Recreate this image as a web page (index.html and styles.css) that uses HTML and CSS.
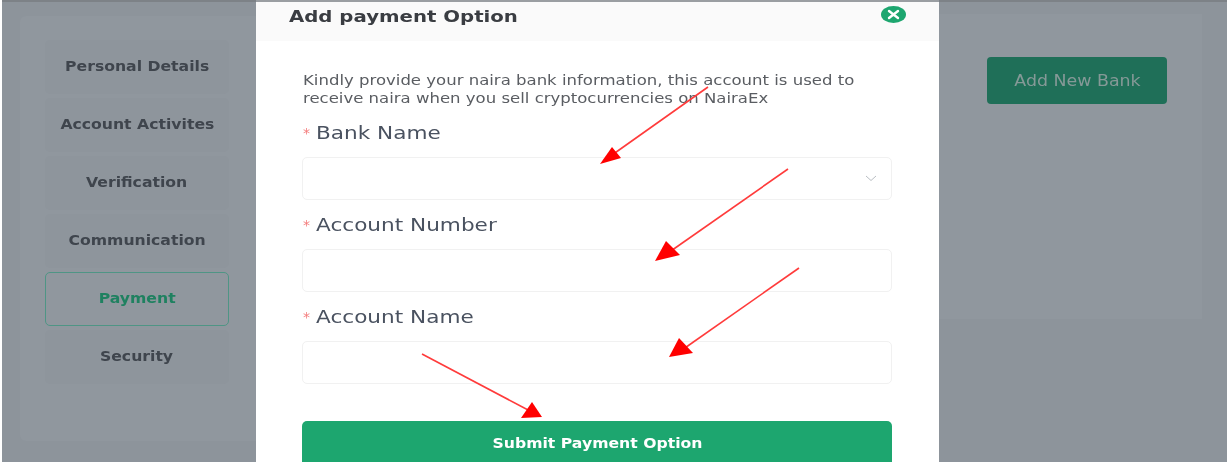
FILE: index.html
```html
<!DOCTYPE html>
<html lang="en">
<head>
    <meta charset="UTF-8">
    <title>Add payment Option</title>
    <link rel="stylesheet" href="styles.css">
</head>
<body>
    <div class="screen">
        <aside class="side-col">
            <nav class="side-panel">
                <a class="side-item"><span>Personal Details</span></a>
                <a class="side-item"><span>Account Activites</span></a>
                <a class="side-item"><span>Verification</span></a>
                <a class="side-item"><span>Communication</span></a>
                <a class="side-item active"><span>Payment</span></a>
                <a class="side-item"><span>Security</span></a>
            </nav>
        </aside>

        <section class="modal">
            <header class="modal-head">
                <h2>Add payment Option</h2>
                <svg class="close-icon" width="25" height="17" viewBox="0 0 25 17">
                    <ellipse cx="12.5" cy="8.5" rx="12.5" ry="8.5" fill="#1da66f"/>
                    <path d="M8 5l9 7M17 5l-9 7" stroke="#fff" stroke-width="2.4" stroke-linecap="round"/>
                </svg>
            </header>
            <div class="modal-body">
                <p class="intro">Kindly provide your naira bank information, this account is used to receive naira when you sell cryptocurrencies on NairaEx</p>

                <label class="field-label"><span class="req">*</span><span class="label-text">Bank Name</span></label>
                <div class="field">
                    <svg class="chevron" width="12" height="7" viewBox="0 0 12 7">
                        <path d="M1 1l5 4.5L11 1" fill="none" stroke="#b9bec3" stroke-width="1"/>
                    </svg>
                </div>

                <label class="field-label"><span class="req">*</span><span class="label-text">Account Number</span></label>
                <div class="field"></div>

                <label class="field-label"><span class="req">*</span><span class="label-text">Account Name</span></label>
                <div class="field"></div>

                <button class="submit-btn"><span>Submit Payment Option</span></button>
            </div>
        </section>

        <div class="right-col">
            <div class="right-panel">
                <button class="add-btn"><span>Add New Bank</span></button>
            </div>
        </div>

        <!-- fleches rouges par dessus la capture -->
        <svg class="arrows" width="1227" height="462" viewBox="0 0 1227 462">
            <g stroke="#ff3b3b" stroke-width="1.6">
                <path d="M708 87L612 155"/>
                <path d="M788 169L668 253"/>
                <path d="M799 268L682 350"/>
                <path d="M422 354L530 411"/>
            </g>
            <g fill="#f00">
                <path d="M600 164L612 147 621 158z"/>
                <path d="M655 261L666 241 680 255z"/>
                <path d="M669 357L679 338 693 353z"/>
                <path d="M521 418L532 402 542 417z"/>
            </g>
        </svg>
    </div>
</body>
</html>
```

FILE: styles.css
```css
/* Style global */
html, body {
    margin: 0;
    padding: 0;
    background-color: #fff;
}

body {
    font-family: "DejaVu Sans", sans-serif;
    overflow: hidden;
}

.screen {
    position: relative;
    display: flex;
    width: 1227px;
    height: 462px;
    box-sizing: border-box;
    padding-left: 2px;
    overflow: hidden;
    filter: blur(0.45px);
}

/* Texte etire : la capture est plus large que haute */
.side-item span,
.submit-btn span,
.add-btn span {
    display: inline-block;
    transform: scaleX(1.16);
}

/* Fond assombri */
.side-col {
    width: 254px;
    flex: none;
    box-sizing: border-box;
    padding: 14px 0 21px 18px;
    background-color: #8d949b;
    border-top: 2px solid #7d8287;
}

.side-panel {
    display: flex;
    flex-direction: column;
    gap: 4px;
    height: 100%;
    box-sizing: border-box;
    padding: 24px 0 0 25px;
    background-color: #90979e;
    border-radius: 6px 0 0 6px;
}

.side-item {
    display: flex;
    align-items: center;
    justify-content: center;
    width: 184px;
    height: 54px;
    box-sizing: border-box;
    padding-bottom: 2px;
    background-color: #8e959c;
    border-radius: 5px;
    color: #3f454d;
    font-size: 13.5px;
    font-weight: bold;
}

.side-item.active {
    border: 1.5px solid #4f9585;
    background-color: #90979e;
    color: #1f8160;
}

/* Fenetre */
.modal {
    width: 683px;
    flex: none;
    background-color: #fff;
    border-top: 2px solid #9a9ea2;
}

.modal-head {
    display: flex;
    align-items: flex-start;
    justify-content: space-between;
    height: 39px;
    box-sizing: border-box;
    padding: 4px 33px 0 33px;
    background-color: #fafafa;
}

.modal-head h2 {
    margin: 0;
    color: #3a3d42;
    font-size: 16.5px;
    line-height: 21px;
    font-weight: bold;
    transform: scaleX(1.195);
    transform-origin: left;
}

.close-icon {
    display: block;
}

.modal-body {
    padding: 30px 47px 0 46px;
}

.intro {
    width: 480px;
    margin: 0 0 16px 1px;
    color: #5a5d62;
    font-size: 14px;
    line-height: 18px;
    transform: scaleX(1.18);
    transform-origin: left;
}

.field-label {
    display: flex;
    align-items: center;
    height: 22px;
    box-sizing: border-box;
    margin-bottom: 12px;
    padding: 0 0 2px 1px;
    color: #4a5260;
    font-size: 17px;
    line-height: 20px;
    white-space: nowrap;
}

.req {
    width: 13px;
    color: #f47c7c;
    font-size: 14px;
}

.label-text {
    display: inline-block;
    transform: scaleX(1.27);
    transform-origin: left;
}

.field {
    display: flex;
    align-items: center;
    justify-content: flex-end;
    height: 43px;
    box-sizing: border-box;
    margin-bottom: 15px;
    padding-right: 14px;
    border: 1px solid #f1f1f1;
    border-radius: 5px;
    background-color: #fff;
}

.submit-btn {
    display: block;
    width: 100%;
    height: 50px;
    margin-top: 37px;
    padding: 0 0 6px;
    border: none;
    border-radius: 5px;
    background-color: #1da66f;
    color: #fff;
    font-family: inherit;
    font-size: 13.5px;
    font-weight: bold;
}

/* Colonne de droite */
.right-col {
    flex: 1;
    box-sizing: border-box;
    padding-right: 25px;
    background-color: #8d949b;
    border-top: 2px solid #7d8287;
}

.right-panel {
    height: 305px;
    box-sizing: border-box;
    margin-top: 12px;
    padding: 43px 0 0 48px;
    background-color: #90979e;
}

.add-btn {
    width: 180px;
    height: 47px;
    border: none;
    border-radius: 4px;
    background-color: #1f6f58;
    color: #859997;
    font-family: inherit;
    font-size: 15px;
}

.arrows {
    position: absolute;
    top: 0;
    left: 0;
    pointer-events: none;
}
```
